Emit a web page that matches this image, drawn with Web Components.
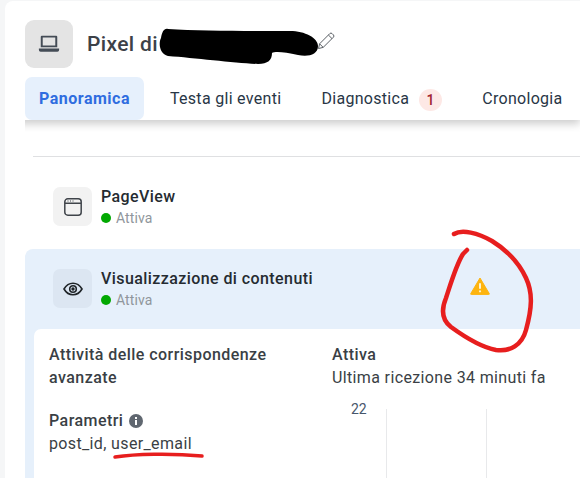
<!DOCTYPE html>
<html lang="it">
<head>
<meta charset="utf-8">
<title>Pixel</title>
<style>
  html, body { margin: 0; height: 100%; overflow: hidden; background: #f5f6f7; }
  body { font-family: Roboto, "Liberation Sans", sans-serif; color: #1c2b33; position: relative; }
</style>
</head>
<body>
<template id="tpl-icon-box">
  <style>
    :host { display: flex; align-items: center; justify-content: center; flex: none; width: var(--size, 39px); height: var(--size, 39px); border-radius: var(--radius, 7px); background: var(--bg, #f2f2f2); }
  </style>
  <slot></slot>
</template>

<template id="tpl-tab">
  <style>
    :host { display: flex; align-items: center; gap: 10px; height: 43px; padding: 0 14px; margin-right: 12px; font-size: 16px; letter-spacing: .3px; color: #283646; border-radius: 7px; white-space: nowrap; }
    :host([active]) { background: #e6f0fc; color: #2f6de0; font-weight: 700; letter-spacing: .5px; }
    .badge { display: none; align-items: center; justify-content: center; width: 23px; height: 22px; margin-top: 2px; border-radius: 50%; background: #fde8e5; color: #a0232f; font-size: 14px; font-weight: 500; }
    :host([badge]) .badge { display: flex; }
  </style>
  <slot></slot><span class="badge"></span>
</template>

<template id="tpl-event-row">
  <style>
    :host { display: flex; align-items: center; gap: 9px; height: 39px; padding-left: 28px; }
    .name { font-size: 16px; font-weight: 500; line-height: 19px; color: #252b31; letter-spacing: .42px; }
    .status { display: flex; align-items: center; gap: 5px; margin-top: 3px; height: 17px; font-size: 14px; color: #90969c; letter-spacing: .1px; }
    .dot { width: 10px; height: 10px; border-radius: 50%; background: #02a802; }
  </style>
  <slot name="icon"></slot>
  <div>
    <div class="name"></div>
    <div class="status"><span class="dot"></span>Attiva</div>
  </div>
</template>

<template id="tpl-tabs">
  <style>
    :host { display: flex; margin-top: 9px; padding-left: 20px; background: #fff; border-radius: 0 0 0 7px; box-shadow: 0 4px 8px rgba(0,0,0,.2); clip-path: inset(0 -20px -20px 20px); }
  </style>
  <slot></slot>
</template>

<template id="tpl-details">
  <style>
    :host { display: grid; grid-template-columns: 283px 1fr; margin: 21px 0 0 9px; padding: 14px 15px 0; background: #fff; border-radius: 7px 0 0 0; height: 150px; font-size: 16px; line-height: 23px; color: #3a3f45; letter-spacing: .36px; }
    b { font-weight: 500; letter-spacing: .45px; }
    .lead { height: 66px; }
    .param { display: flex; align-items: center; gap: 6px; }
    .chart { position: relative; height: 90px; }
    .chart span { position: absolute; left: 19px; top: 2px; font-size: 14px; line-height: 16px; letter-spacing: 0; color: #47566b; }
    .chart i { position: absolute; top: 10px; bottom: 0; width: 1px; background: #e8e9eb; }
  </style>
  <div>
    <div class="lead"><b>Attività delle corrispondenze<br>avanzate</b></div>
    <div class="param"><b>Parametri</b>
      <svg width="14" height="14" viewBox="0 0 14 14"><circle cx="7" cy="7" r="7" fill="#606770"/><rect x="6" y="6" width="2" height="5" fill="#fff"/><rect x="6" y="3" width="2" height="2" fill="#fff"/></svg>
    </div>
    <div>post_id, user_email</div>
  </div>
  <div>
    <div><b>Attiva</b></div>
    <div>Ultima ricezione 34 minuti fa</div>
    <div class="chart" style="margin-top:10px"><span>22</span><i style="left:54px"></i><i style="left:154px"></i></div>
  </div>
</template>

<template id="tpl-pixel-card">
  <style>
    :host { display: block; margin: 1px 0 0 5px; height: 477px; background: #fff; border-radius: 8px 0 0 0; overflow: hidden; }
    header { display: flex; align-items: center; gap: 14px; padding: 19px 0 0 20px; }
    h1 { margin: 0; font-size: 21px; font-weight: 500; color: #3c4148; letter-spacing: .35px; }
    .pencil { margin-left: 144px; margin-top: -6px; }
    hr { border: 0; height: 1px; background: #dfe0e2; margin: 36px 0 0 28px; }
    .spacer-a { height: 30px; }
    .plain { margin-left: 20px; }
    .selected { margin: 23px 0 0 20px; padding-top: 20px; background: #e6f0fb; border-radius: 8px 0 0 0; position: relative; }
    .warn { position: absolute; left: 445px; top: 28px; }
  </style>
  <header>
    <icon-box style="--size:48px;--radius:9px;--bg:#e4e4e4">
      <svg width="22" height="22" viewBox="0 0 20 20"><path d="M3.500 2.500h13a1 1 0 0 1 1 1v9.500h-15V3.500a1 1 0 0 1 1-1Zm.8 1.700v7.200h11.400V4.200Z" fill="#444c56" fill-rule="evenodd"/><path d="M.8 14h18.400v1.400a1.600 1.600 0 0 1-1.600 1.600H2.400a1.600 1.600 0 0 1-1.600-1.600Z" fill="#444c56"/></svg>
    </icon-box>
    <h1>Pixel di</h1>
    <svg class="pencil" width="20" height="20" viewBox="0 0 20 20" fill="none" stroke="#5a5f65" stroke-width="1"><path d="M2.500 17.500 3.600 12.800 13.800 2.600a1.600 1.600 0 0 1 2.300 0l1.300 1.300a1.600 1.600 0 0 1 0 2.300L7.200 16.400Z"/><path d="M12.400 4l3.600 3.600M3.600 12.800l3.600 3.600"/></svg>
  </header>
  <tab-bar>
    <x-tab active>Panoramica</x-tab>
    <x-tab>Testa gli eventi</x-tab>
    <x-tab badge="1">Diagnostica</x-tab>
    <x-tab>Cronologia</x-tab>
  </tab-bar>
  <hr>
  <div class="spacer-a"></div>
  <event-row class="plain" name="PageView">
    <icon-box slot="icon">
      <svg width="20" height="20" viewBox="0 0 20 20" fill="none" stroke="#3f444a" stroke-width="1.500"><rect x="1.800" y="1.800" width="16.400" height="16.400" rx="3"/><path d="M2 6.200h16"/><path d="M4.500 4h1M7 4h1M9.500 4h1" stroke-width="1"/></svg>
    </icon-box>
  </event-row>
  <div class="selected">
    <event-row name="Visualizzazione di contenuti">
      <icon-box slot="icon" style="--bg:#dce6f2">
        <svg width="20" height="14" viewBox="0 0 20 14" fill="none" stroke="#1f2428" stroke-width="1.600"><path d="M1 7c2.200-3.800 5.300-5.800 9-5.800S16.800 3.200 19 7c-2.200 3.800-5.300 5.800-9 5.800S3.200 10.800 1 7Z"/><circle cx="10" cy="7" r="3.300"/><circle cx="10" cy="7" r="1.700" fill="#1f2428" stroke="none"/></svg>
      </icon-box>
    </event-row>
    <svg class="warn" width="20" height="18" viewBox="0 0 20 18"><path d="M10 1 19.200 16.500a.6.6 0 0 1-.5.9H1.300a.6.6 0 0 1-.5-.9Z" fill="#fdb40f" stroke="#fdb40f" stroke-linejoin="round"/><rect x="9" y="6" width="2" height="6" rx="1" fill="#fff3d0"/><circle cx="10" cy="14.300" r="1.100" fill="#fff3d0"/></svg>
    <detail-panel></detail-panel>
  </div>
</template>

<pixel-card></pixel-card>

<!-- redaction and red marker annotations lying over the screenshot -->
<svg style="position:absolute;left:0;top:0;pointer-events:none" width="580" height="478" viewBox="0 0 580 478">
  <path d="M168 29C200 31 250 31 290 31C305 31 318 38 318 46C318 55 308 57 298 55C285 52 275 51 272 53C272 60 268 64 258 64C235 63 195 58 168 56C160 54 158 44 161 38C162 32 164 28 168 29Z" fill="#000"/>
  <path d="M454 234C462 229 478 233 492 241C505 249 518 261 526 278C533 293 532 308 526 330C522 345 510 352 496 350C480 347 462 335 451 327C442 320 441 310 446 298C451 283 456 265 463 254L467 250" fill="none" stroke="#e71e1e" stroke-width="4.500" stroke-linecap="round" stroke-linejoin="round"/>
  <path d="M115 457C135 454 170 453 202 456" fill="none" stroke="#e71e1e" stroke-width="3.500" stroke-linecap="round"/>
</svg>

<script>
  const fromTemplate = (el, id) => {
    el.attachShadow({ mode: "open" }).appendChild(document.getElementById(id).content.cloneNode(true))
  }

  class IconBox extends HTMLElement {
    constructor() { super(); fromTemplate(this, "tpl-icon-box") }
  }

  class XTab extends HTMLElement {
    constructor() { super(); fromTemplate(this, "tpl-tab") }
    connectedCallback() {
      this.shadowRoot.querySelector(".badge").textContent = this.getAttribute("badge") || ""
    }
  }

  class TabBar extends HTMLElement {
    constructor() { super(); fromTemplate(this, "tpl-tabs") }
  }

  class EventRow extends HTMLElement {
    constructor() { super(); fromTemplate(this, "tpl-event-row") }
    connectedCallback() {
      this.shadowRoot.querySelector(".name").textContent = this.getAttribute("name")
    }
  }

  class DetailPanel extends HTMLElement {
    constructor() { super(); fromTemplate(this, "tpl-details") }
  }

  class PixelCard extends HTMLElement {
    constructor() { super(); fromTemplate(this, "tpl-pixel-card") }
  }

  customElements.define("icon-box", IconBox)
  customElements.define("x-tab", XTab)
  customElements.define("tab-bar", TabBar)
  customElements.define("event-row", EventRow)
  customElements.define("detail-panel", DetailPanel)
  customElements.define("pixel-card", PixelCard)
</script>
</body>
</html>
